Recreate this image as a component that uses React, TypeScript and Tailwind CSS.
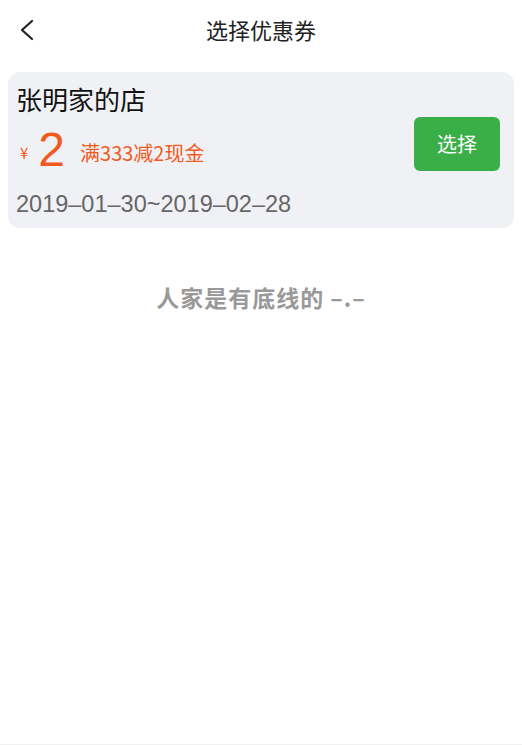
const font = { fontFamily: '"Noto Sans CJK SC", "Noto Sans", sans-serif' }
const latin = { fontFamily: '"Liberation Sans", sans-serif' }

const CouponCard = () => (
  <div className="mx-2 mt-[8px] flex items-center justify-between rounded-[12px] bg-[#f0f1f5] pl-2 pr-[14px] pt-[7px] pb-[6px]">
    <div className="flex flex-col">
      <div className="text-[26px] leading-[40px] text-[#111]">张明家的店</div>
      <div className="mt-[8px] flex h-[46px] items-center">
        <span className="ml-1 mt-[6px] text-[15px] text-[#f05a1f]">¥</span>
        <span className="ml-[10px] text-[48px] leading-none text-[#f05a1f]" style={latin}>
          2
        </span>
        <span className="ml-[15px] mt-[6px] text-[20px] text-[#f05a1f]">满333减2现金</span>
      </div>
      <div className="mt-[13px] text-[23.5px] leading-[36px] text-[#666]" style={latin}>
        2019–01–30~2019–02–28
      </div>
    </div>
    <button className="mt-[-14px] flex h-[54px] w-[86px] items-center justify-center rounded-[6px] bg-[#3aae47] text-[20px] text-white">
      选择
    </button>
  </div>
)

export default function App() {
  return (
    <div className="h-[745px] w-[522px] border-b border-[#f0f0f0] bg-white" style={font}>
      <div className="relative flex h-[64px] items-center justify-center pb-[6px]">
        <svg className="absolute left-[18px] top-[19px]" width="18" height="22" viewBox="0 0 18 22" fill="none">
          <path d="M14 2 L4 11 L14 20" stroke="#222" strokeWidth="2.2" strokeLinecap="round" strokeLinejoin="round" />
        </svg>
        <div className="text-[22px] text-[#222]">选择优惠券</div>
      </div>
      <CouponCard />
      <div className="mt-[52px] text-center text-[23px] font-bold tracking-[1px] text-[#999]">人家是有底线的 –.–</div>
    </div>
  )
}
